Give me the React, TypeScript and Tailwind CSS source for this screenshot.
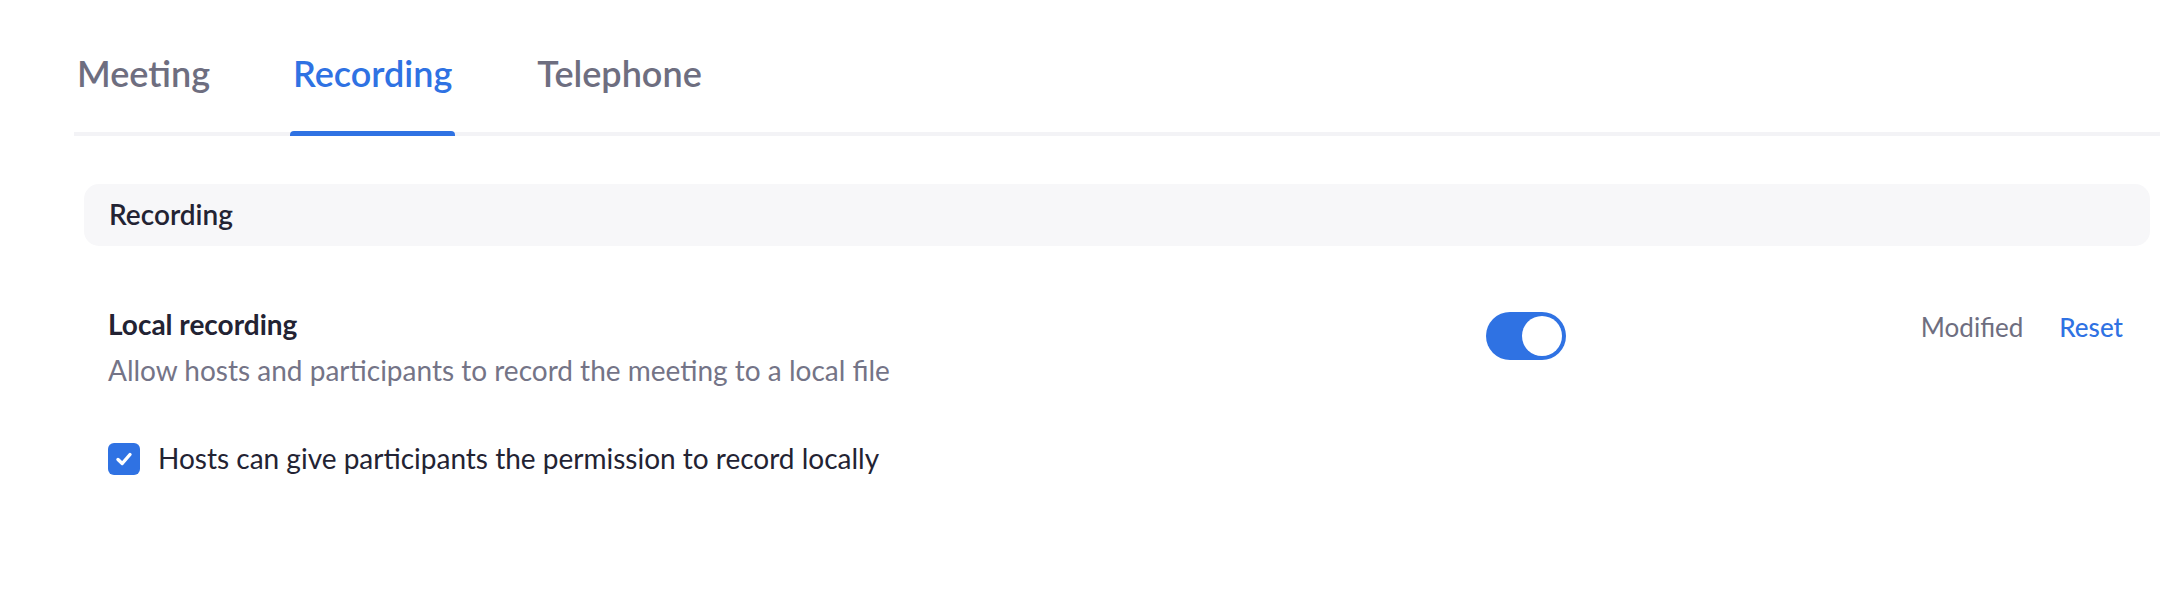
import React from "react";

export default function App() {
  const font = { fontFamily: "Lato, 'Noto Sans', sans-serif" };
  return (
    <div className="w-[2182px] h-[590px] bg-white" style={font}>
      <div className="pl-[74px] pr-[22px]">
        {/* Tabs */}
        <div className="flex border-b-4 border-[#f3f3f6] pl-[3px]">
          <div className="pt-[52px] pb-[37px] text-[36px] leading-[1.2] font-semibold text-[#6e6e80]">
            Meeting
          </div>
          <div className="relative ml-[83px] pt-[52px] pb-[37px] text-[36px] leading-[1.2] font-semibold text-[#2f72e3]">
            Recording
            <div className="absolute left-[-3px] right-[-3px] bottom-[-4px] h-[5px] rounded-t-[4px] bg-[#2f72e3]" />
          </div>
          <div className="ml-[85px] pt-[52px] pb-[37px] text-[36px] leading-[1.2] font-semibold text-[#6e6e80]">
            Telephone
          </div>
        </div>
      </div>

      <div className="pl-[84px] pr-[32px] pt-[48px]">
        {/* Section header */}
        <div className="rounded-[15px] bg-[#f7f7f9] px-[25px] py-[14px] text-[28px] leading-[1.2] font-semibold text-[#232333]">
          Recording
        </div>

        {/* Setting row */}
        <div className="pl-[24px] pr-[27px] pt-[62px]">
          <div className="flex items-start">
            <div className="w-[1378px]">
              <div className="text-[28px] leading-[1.2] font-bold text-[#232333]">
                Local recording
              </div>
              <div className="mt-[13px] text-[28px] leading-[1.2] text-[#747487]">
                Allow hosts and participants to record the meeting to a local file
              </div>
            </div>
            <div className="mt-[4px] flex h-[48px] w-[80px] items-center justify-end rounded-full bg-[#2f72e3] pr-[4px]">
              <div className="h-[40px] w-[40px] rounded-full bg-white" />
            </div>
            <div className="ml-auto mt-[4px] flex items-center text-[26px] leading-[1.2]">
              <span className="text-[#6e6e80]">Modified</span>
              <span className="ml-[36px] font-medium text-[#2f72e3]">Reset</span>
            </div>
          </div>

          <div className="mt-[54px] flex items-center">
            <div className="flex h-[32px] w-[32px] items-center justify-center rounded-[6px] bg-[#2f72e3]">
              <svg width="22" height="22" viewBox="0 0 22 22" fill="none">
                <path
                  d="M5 11.5 L9.2 15.5 L17 6.5"
                  stroke="white"
                  strokeWidth="3.4"
                  strokeLinecap="round"
                  strokeLinejoin="round"
                />
              </svg>
            </div>
            <span className="ml-[18px] text-[28px] leading-[1.2] text-[#232333]">
              Hosts can give participants the permission to record locally
            </span>
          </div>
        </div>
      </div>
    </div>
  );
}
